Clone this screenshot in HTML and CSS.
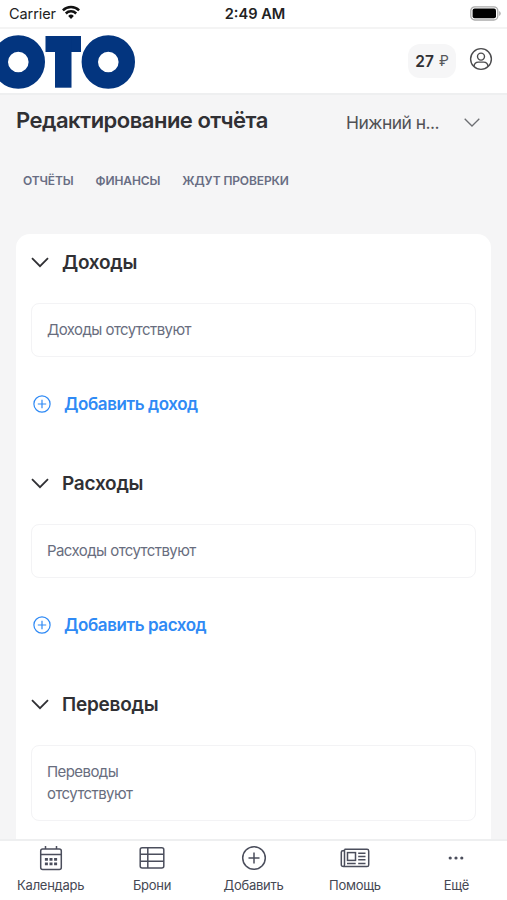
FILE: index.html
```html
<!DOCTYPE html>
<html lang="ru">
<head>
<meta charset="utf-8">
<meta name="viewport" content="width=device-width, initial-scale=1">
<title>Редактирование отчёта</title>
<link rel="stylesheet" href="styles.css">
</head>
<body>
<div class="screen">
  <div class="status">
    <div class="carrier"><span>Carrier</span>
      <svg width="18" height="14" viewBox="0 0 18 14" fill="none" stroke="#111" stroke-width="2.5"><path d="M.9 5.3a11.5 11.5 0 0 1 16.2 0M3.8 8.5a7.4 7.4 0 0 1 10.4 0"/><path d="M9 14l-2.8-3.1a4 4 0 0 1 5.6 0z" fill="#111" stroke="none"/></svg>
    </div>
    <span class="clock">2:49 AM</span>
    <svg class="battery" width="31" height="15" viewBox="0 0 31 15"><rect x=".8" y=".8" width="27" height="13.2" rx="4" fill="#fff" stroke="#aaa" stroke-width="1.3"/><rect x="2.6" y="2.6" width="23.4" height="9.6" rx="2" fill="#000"/><path d="M29.2 5v5q1.5-.8 1.5-2.5T29.2 5" fill="#aaa"/></svg>
  </div>
  <header class="header">
    <svg class="logo" width="136" height="56" viewBox="0 0 136 56" role="img" aria-label="ОТО"><g fill="none" stroke="#03357f" stroke-width="16.4"><circle cx="18.3" cy="28" r="18.5"/><circle cx="108.3" cy="28" r="18.5"/></g><g fill="#03357f"><rect x="45.5" y="2" width="35.5" height="16"/><rect x="55" y="2" width="16.5" height="51.7"/></g></svg>
    <div class="balance"><b>27</b><span>₽</span></div>
    <svg class="user" width="24" height="24" viewBox="0 0 24 24" fill="none" stroke="#4c4c4e" stroke-width="1.4"><circle cx="12" cy="12" r="10.4"/><circle cx="12" cy="9.6" r="3.5"/><path d="M5 19.4c.3-3 2-4.3 4.4-4.3h5.2c2.4 0 4.1 1.3 4.4 4.3"/></svg>
  </header>
  <main class="content">
    <div class="titlebar">
      <h1>Редактирование отчёта</h1>
      <div class="city"><span>Нижний н...</span><svg width="16" height="9" viewBox="0 0 16 9" fill="none" stroke="#6c6e72" stroke-width="1.3"><path d="M.7.8 8 8 15.3.8"/></svg></div>
    </div>
    <nav class="tabs"><a>ОТЧЁТЫ</a><a>ФИНАНСЫ</a><a>ЖДУТ ПРОВЕРКИ</a></nav>
    <div class="card">
      <section>
        <h2><svg class="chev" width="18" height="11" viewBox="0 0 18 11"><path d="M1 1.2 9 9.2 17 1.2"/></svg><span>Доходы</span></h2>
        <div class="empty">Доходы отсутствуют</div>
        <a class="add"><svg width="18" height="18" viewBox="0 0 18 18"><circle cx="9" cy="9" r="8.1"/><path d="M9 4.8v8.4M4.8 9h8.4"/></svg><span>Добавить доход</span></a>
      </section>
      <section>
        <h2><svg class="chev" width="18" height="11" viewBox="0 0 18 11"><path d="M1 1.2 9 9.2 17 1.2"/></svg><span>Расходы</span></h2>
        <div class="empty">Расходы отсутствуют</div>
        <a class="add"><svg width="18" height="18" viewBox="0 0 18 18"><circle cx="9" cy="9" r="8.1"/><path d="M9 4.8v8.4M4.8 9h8.4"/></svg><span>Добавить расход</span></a>
      </section>
      <section>
        <h2><svg class="chev" width="18" height="11" viewBox="0 0 18 11"><path d="M1 1.2 9 9.2 17 1.2"/></svg><span>Переводы</span></h2>
        <div class="empty">Переводы<br>отсутствуют</div>
      </section>
    </div>
  </main>
  <nav class="bottom">
    <a><svg width="26" height="26" viewBox="0 0 26 26"><rect x="2.7" y="4" width="20.6" height="20.6" rx="2"/><path d="M2.7 9.5h20.6M7.5 1v3M18.5 1v3"/><path d="M6.9 14.3h3M11.5 14.3h3M16.1 14.3h3M6.9 18.9h3M11.5 18.9h3M16.1 18.9h3" stroke-width="2.8"/></svg><span>Календарь</span></a>
    <a><svg width="26" height="26" viewBox="0 0 26 26"><rect x="1.2" y="2.7" width="23.6" height="20.3" rx="2"/><path d="M1.2 9.3h23.6M1.2 16.3h23.6M8.8 2.7v20.3"/></svg><span>Брони</span></a>
    <a><svg width="26" height="26" viewBox="0 0 26 26"><circle cx="13" cy="13" r="11.3"/><path d="M13 7.5v11M7.5 13h11"/></svg><span>Добавить</span></a>
    <a><svg width="30" height="26" viewBox="0 0 30 26"><path d="M4.5 4.2H27q1.7 0 1.7 1.7v14q0 1.7-1.7 1.7H3.5q-2.2 0-2.2-2V7.2q0-1.5 1.5-1.5h1.7M4.5 4.2v15.6q0 1.8-1.5 1.8"/><rect x="7.5" y="7.6" width="8" height="7.8"/><path d="M18.2 8.3h7.3M18.2 11.5h7.3M18.2 14.7h7.3M7 18.5h8.7M18.2 18.5h7.3"/></svg><span>Помощь</span></a>
    <a><svg class="dots" width="26" height="26" viewBox="0 0 26 26"><circle cx="7.2" cy="13" r="1.6"/><circle cx="13" cy="13" r="1.6"/><circle cx="18.8" cy="13" r="1.6"/></svg><span>Ещё</span></a>
  </nav>
</div>
</body>
</html>
```
FILE: styles.css
```css
* { box-sizing: border-box; }
body { margin: 0; font-family: Inter, "Liberation Sans", sans-serif; color: #303034; background: #f5f5f6; }
.screen { height: 900px; display: flex; flex-direction: column; overflow: hidden; }
svg { display: block; flex: none; }
span, a, b, h1 { white-space: nowrap; }
.status { height: 29px; flex: none; display: grid; grid-template-columns: 1fr auto 1fr; align-items: center; background: #fff; border-bottom: 2px solid #f4f4f4; padding: 0 6px 0 9px; color: #222; font-size: 14.6px; }
.carrier { display: flex; align-items: center; gap: 6px; font-size: 14.5px; letter-spacing: -.08px; }
.carrier svg { margin-top: -3px; }
.clock { font-weight: 600; }
.battery { justify-self: end; }
.header { height: 66px; flex: none; display: flex; align-items: center; background: #fff; border-bottom: 2px solid #eeeff0; padding-right: 14px; }
.logo { margin-top: 2px; }
.balance { margin-left: auto; width: 48px; height: 34px; border-radius: 12px; background: #f6f6f7; display: flex; align-items: center; justify-content: center; gap: 5px; font-size: 15.5px; margin-right: 13px; }
.balance b { font-weight: 600; }
.balance span { font-size: 14px; color: #55565a; margin-top: -2px; }
.user { margin-top: -4px; }
.content { flex: 1; min-height: 0; overflow: hidden; padding: 0 16px; }
.titlebar { height: 52px; display: flex; justify-content: space-between; align-items: center; padding-right: 11px; }
h1 { margin: -2px 0 0; font-size: 22px; line-height: 28px; font-weight: 600; letter-spacing: -.51px; }
.city { display: flex; align-items: center; gap: 25px; color: #505155; font-size: 17.5px; letter-spacing: -.55px; margin-top: 3px; }
.tabs { display: flex; gap: 22px; padding: 25px 7px 0; height: 87px; font-size: 12px; line-height: 18px; font-weight: 600; letter-spacing: -.12px; color: #686d83; }
.card { background: #fff; border-radius: 14px; padding: 13px 15px 0; height: 700px; }
section { height: 221px; }
h2 { margin: 0; height: 30px; display: flex; align-items: center; gap: 13px; font-size: 19px; font-weight: 600; letter-spacing: -.25px; }
.chev { fill: none; stroke: #303034; stroke-width: 1.8; }
.empty { margin-top: 26px; border: 1px solid #f3f3f5; border-radius: 8px; padding: 15px; font-size: 15px; line-height: 22px; letter-spacing: -.57px; color: #686d7e; }
.add { margin: 35px 0 0 2px; height: 24px; display: flex; align-items: center; gap: 13px; color: #2f8af5; font-size: 17px; font-weight: 600; letter-spacing: -.42px; }
.add svg { fill: none; stroke: #2f8af5; stroke-width: 1.2; }
.bottom { height: 61px; flex: none; display: flex; background: #fff; border-top: 2px solid #eeeff0; }
.bottom a { flex: 1; display: flex; flex-direction: column; align-items: center; padding-top: 4px; gap: 5px; font-size: 13px; line-height: 18px; letter-spacing: -.25px; color: #454853; }
.bottom svg { fill: none; stroke: #4b4e5c; stroke-width: 1.5; }
.bottom .dots { fill: #4b4e5c; stroke: none; }
```
